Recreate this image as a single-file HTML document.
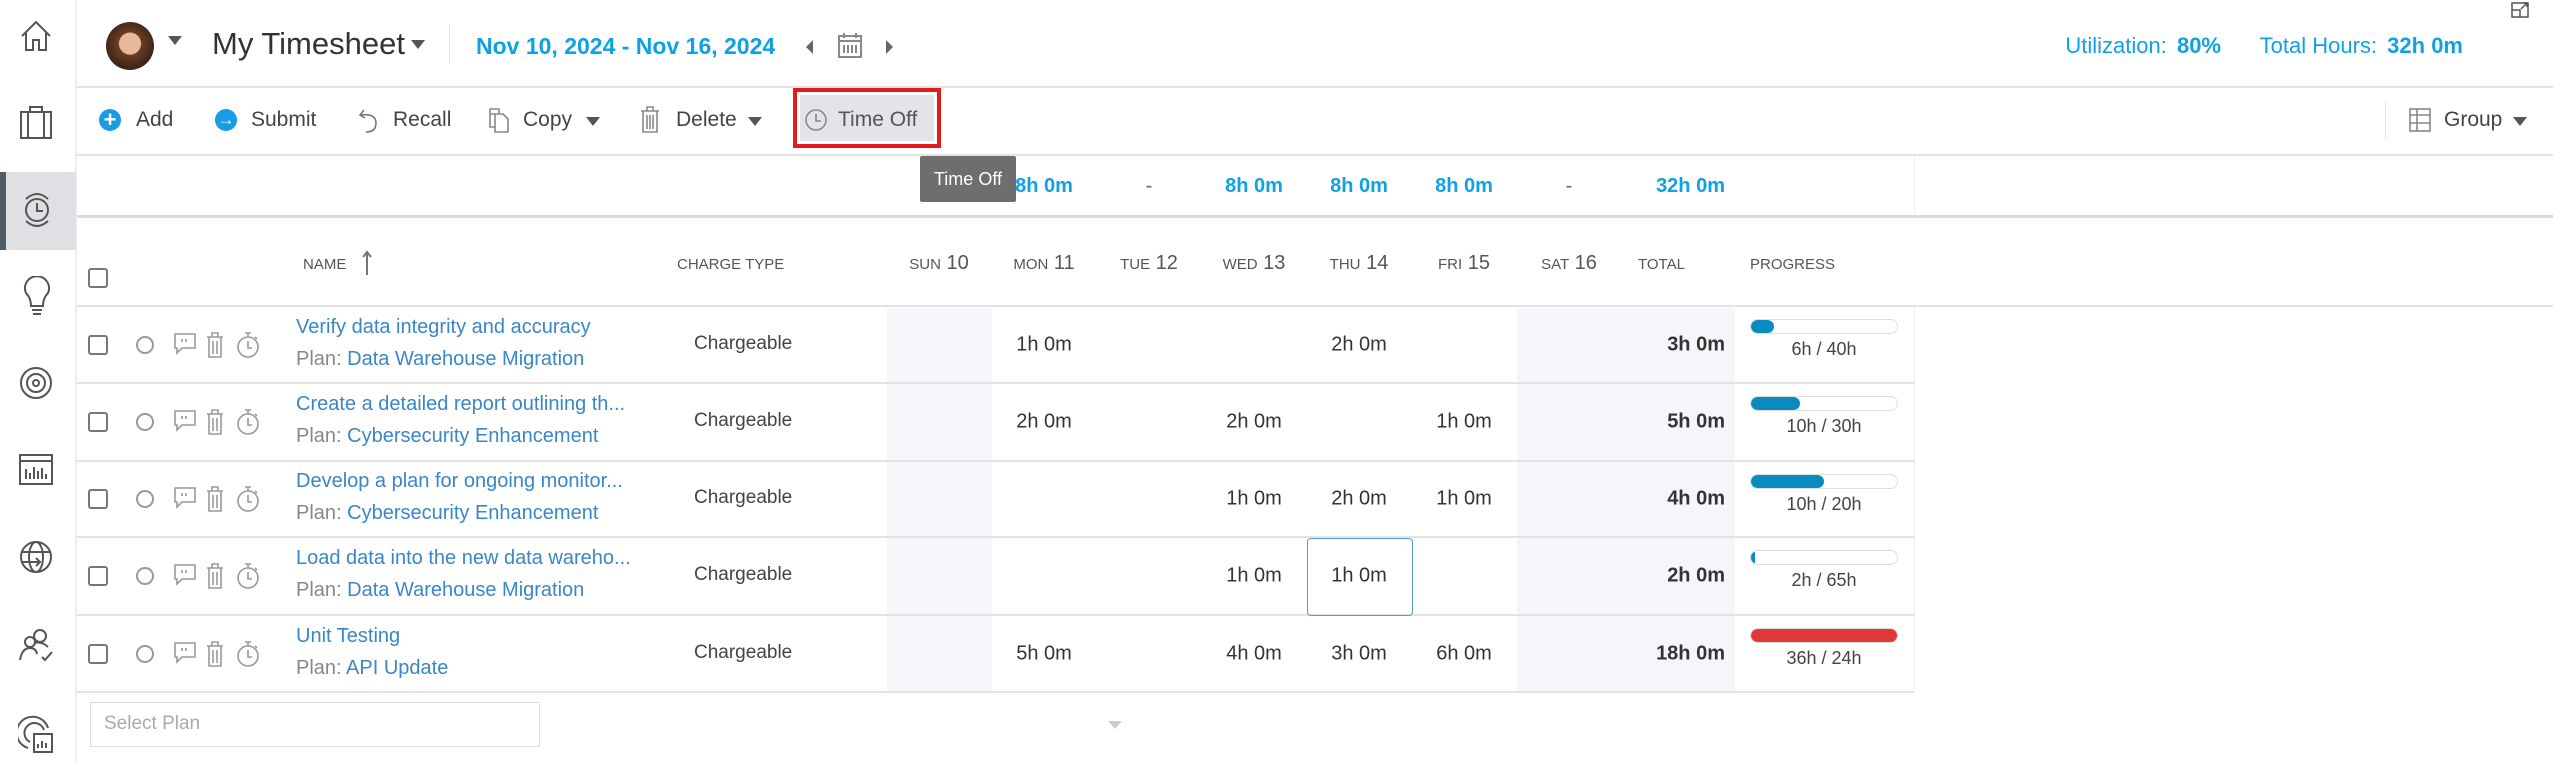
<!DOCTYPE html>
<html><head><meta charset="utf-8">
<style>
*{box-sizing:border-box;margin:0;padding:0}
body{width:2553px;height:762px;overflow:hidden;background:#fff;font-family:"Liberation Sans",sans-serif;position:relative;color:#444}
.a{position:absolute;white-space:nowrap}
.hl{position:absolute;height:2px;background:#e3e3e3}
.blue{color:#0ea1e6}
.link{color:#3a86c8}
.c{transform:translateX(-50%)}
.dh{position:absolute;top:252px;font-size:20px;color:#555;transform:translateX(-50%)}
.dh small{font-size:15px}
.cell{position:absolute;font-size:20px;color:#333;transform:translate(-50%,-50%)}
.tot{position:absolute;font-size:20px;font-weight:bold;color:#333;right:828px;transform:translateY(-50%)}
svg{position:absolute}
</style></head><body>
<!-- sidebar -->
<div class="a" style="left:0;top:0;width:77px;height:762px;border-right:2px solid #eee"></div>
<div class="a" style="left:0;top:172px;width:76px;height:78px;background:#dfe0e3"></div>
<div class="a" style="left:0;top:172px;width:6px;height:78px;background:#4e5d66"></div>
<svg style="left:18px;top:18px" width="36" height="36" viewBox="0 0 36 36" fill="none" stroke="#555" stroke-width="2"><path d="M4 18 L18 4 L32 18 M8 14 V32 H15 V22 H21 V32 H28 V14"/></svg>
<svg style="left:18px;top:104px" width="36" height="36" viewBox="0 0 36 36" fill="none" stroke="#555" stroke-width="2"><rect x="3" y="8" width="30" height="26"/><path d="M12 8 V3 H24 V8 M10 8 V34 M26 8 V34"/></svg>
<svg style="left:20px;top:191px" width="34" height="38" viewBox="0 0 34 38" fill="none" stroke="#555" stroke-width="2"><circle cx="17" cy="19" r="11"/><path d="M17 12 V20 H23 M6 8 Q17 -2 28 8 M6 30 Q17 40 28 30"/></svg>
<svg style="left:20px;top:276px" width="34" height="40" viewBox="0 0 34 40" fill="none" stroke="#555" stroke-width="2"><path d="M11 30 Q11 22 6 17 A12 12 0 1 1 28 17 Q23 22 23 30 Z M12 34 H22 M13 38 H21"/></svg>
<svg style="left:18px;top:365px" width="36" height="36" viewBox="0 0 36 36" fill="none" stroke="#555" stroke-width="2"><circle cx="18" cy="18" r="15"/><circle cx="18" cy="18" r="9"/><circle cx="18" cy="18" r="3"/></svg>
<svg style="left:18px;top:453px" width="36" height="34" viewBox="0 0 36 34" fill="none" stroke="#555" stroke-width="2"><rect x="2" y="2" width="32" height="29"/><path d="M2 8 H34 M8 26 V16 M12 26 V20 M16 26 V14 M20 26 V18 M24 26 V15 M28 26 V21"/></svg>
<svg style="left:18px;top:539px" width="36" height="36" viewBox="0 0 36 36" fill="none" stroke="#555" stroke-width="2"><circle cx="18" cy="18" r="15"/><ellipse cx="18" cy="18" rx="7" ry="15"/><path d="M4 13 H32 M4 23 H22 M18 19 L22 23 L18 27"/></svg>
<svg style="left:18px;top:627px" width="36" height="36" viewBox="0 0 36 36" fill="none" stroke="#555" stroke-width="2"><circle cx="22" cy="9" r="6"/><circle cx="12" cy="15" r="5"/><path d="M2 33 Q4 21 12 21 Q18 21 19 27 M16 16 Q24 14 30 20 M24 30 L27 33 L34 25"/></svg>
<svg style="left:18px;top:714px" width="36" height="40" viewBox="0 0 36 40" fill="none" stroke="#555" stroke-width="2"><path d="M10 34 A16 16 0 1 1 30 14 M12 28 A10 10 0 1 1 26 16"/><rect x="16" y="20" width="18" height="18"/><path d="M20 34 V30 M24 34 V27 M28 34 V29"/></svg>

<!-- header -->
<div class="a" style="left:106px;top:22px;width:48px;height:48px;border-radius:50%;background:radial-gradient(circle at 50% 45%,#e9b89a 0 30%,#6a3d24 32%,#3a2418 70%,#8a5a2a 100%)"></div>
<div class="a" style="left:168px;top:36px;border-left:7px solid transparent;border-right:7px solid transparent;border-top:9px solid #555"></div>
<div class="a" style="left:212px;top:26px;font-size:31px;color:#333">My Timesheet</div>
<div class="a" style="left:411px;top:40px;border-left:7px solid transparent;border-right:7px solid transparent;border-top:9px solid #555"></div>
<div class="a" style="left:449px;top:24px;width:1px;height:40px;background:#e5e5e5"></div>
<div class="a blue" style="left:476px;top:33px;font-size:23px;font-weight:bold">Nov 10, 2024 - Nov 16, 2024</div>
<div class="a" style="left:806px;top:40px;border-top:7px solid transparent;border-bottom:7px solid transparent;border-right:7px solid #666"></div>
<svg style="left:838px;top:32px" width="24" height="26" viewBox="0 0 24 26" fill="none" stroke="#888" stroke-width="2"><rect x="1" y="4" width="22" height="21"/><path d="M1 9 H23 M6 1 V6 M18 1 V6 M6 13 V21 M10 13 V21 M14 13 V21 M18 13 V21"/></svg>
<div class="a" style="left:886px;top:40px;border-top:7px solid transparent;border-bottom:7px solid transparent;border-left:7px solid #666"></div>
<div class="a blue" style="right:332px;top:33px;font-size:22px">Utilization: <b style="margin-left:4px">80%</b></div>
<div class="a blue" style="right:90px;top:33px;font-size:22px">Total Hours: <b style="margin-left:4px">32h 0m</b></div>
<svg style="left:2511px;top:2px" width="18" height="16" viewBox="0 0 18 16" fill="none" stroke="#555" stroke-width="1.5"><rect x="1" y="1" width="16" height="14"/><path d="M1 8 H9 V15 M10 7 L16 1 M12 1 H16 V5"/></svg>
<div class="hl" style="left:77px;right:0;top:86px"></div>

<!-- toolbar -->
<div class="a" style="left:99px;top:109px;width:22px;height:22px;border-radius:50%;background:#1a9be6;color:#fff;font-size:22px;line-height:21px;text-align:center;font-weight:bold">+</div>
<div class="a" style="left:136px;top:108px;font-size:21px">Add</div>
<div class="a" style="left:215px;top:109px;width:22px;height:22px;border-radius:50%;background:#1a9be6;color:#fff;font-size:17px;line-height:22px;text-align:center;font-weight:bold">→</div>
<div class="a" style="left:251px;top:108px;font-size:21px">Submit</div>
<svg style="left:358px;top:108px" width="22" height="26" viewBox="0 0 22 26" fill="none" stroke="#777" stroke-width="1.6"><path d="M6 2 L2 7 L7 10 M2 7 Q18 5 18 15 Q18 24 8 24"/></svg>
<div class="a" style="left:393px;top:108px;font-size:21px">Recall</div>
<svg style="left:488px;top:107px" width="22" height="26" viewBox="0 0 22 26" fill="none" stroke="#888" stroke-width="1.6"><path d="M2 2 H11 V7 H2 Z M2 2 V20 H7 M7 7 V25 H20 V12 L15 7 H11"/></svg>
<div class="a" style="left:523px;top:108px;font-size:21px">Copy</div>
<div class="a" style="left:586px;top:117px;border-left:7px solid transparent;border-right:7px solid transparent;border-top:9px solid #555"></div>
<svg style="left:640px;top:106px" width="20" height="27" viewBox="0 0 20 27" fill="none" stroke="#888" stroke-width="1.6"><path d="M1 5 H19 M7 5 V1 H13 V5 M3 5 V26 H17 V5 M7 9 V23 M10 9 V23 M13 9 V23"/></svg>
<div class="a" style="left:676px;top:108px;font-size:21px">Delete</div>
<div class="a" style="left:748px;top:117px;border-left:7px solid transparent;border-right:7px solid transparent;border-top:9px solid #555"></div>
<div class="a" style="left:793px;top:88px;width:148px;height:60px;border:4px solid #e21c1c;background:#fff"><div style="position:absolute;left:3px;top:3px;right:3px;bottom:3px;background:#e3e4e8"></div></div>
<svg style="left:804px;top:108px" width="24" height="24" viewBox="0 0 24 24" fill="none" stroke="#888" stroke-width="1.6"><circle cx="12" cy="12" r="10"/><path d="M12 6 V13 H17"/></svg>
<div class="a" style="left:838px;top:108px;font-size:21px;color:#555">Time Off</div>
<div class="a" style="left:2385px;top:102px;width:1px;height:38px;background:#e5e5e5"></div>
<svg style="left:2409px;top:108px" width="22" height="24" viewBox="0 0 22 24" fill="none" stroke="#888" stroke-width="1.6"><rect x="1" y="1" width="20" height="22"/><path d="M1 7 H21 M1 15 H21 M8 7 V23 M8 1 V7"/></svg>
<div class="a" style="left:2444px;top:108px;font-size:21px">Group</div>
<div class="a" style="left:2513px;top:117px;border-left:7px solid transparent;border-right:7px solid transparent;border-top:9px solid #555"></div>
<div class="hl" style="left:77px;right:0;top:154px"></div>

<!-- totals row -->
<div class="a" style="left:1914px;top:155px;width:1px;height:61px;background:#eee"></div>
<div class="a blue c" style="left:1044px;top:175px;font-size:20px;font-weight:bold">8h 0m</div>
<div class="a c" style="left:1149px;top:175px;font-size:20px;color:#666">-</div>
<div class="a blue c" style="left:1254px;top:175px;font-size:20px;font-weight:bold">8h 0m</div>
<div class="a blue c" style="left:1359px;top:175px;font-size:20px;font-weight:bold">8h 0m</div>
<div class="a blue c" style="left:1464px;top:175px;font-size:20px;font-weight:bold">8h 0m</div>
<div class="a c" style="left:1569px;top:175px;font-size:20px;color:#666">-</div>
<div class="a blue" style="right:828px;top:175px;font-size:20px;font-weight:bold">32h 0m</div>
<div class="a" style="left:920px;top:156px;width:96px;height:46px;background:#6e6e6e;border-radius:2px;color:#fff;font-size:18px;line-height:46px;text-align:center">Time Off</div>
<div class="a" style="left:77px;right:0;top:215px;height:3px;background:#d8dbe3"></div>

<!-- shaded columns -->
<div class="a" style="left:887px;top:308px;width:105px;height:384px;background:#f5f6fa"></div>
<div class="a" style="left:1517px;top:308px;width:218px;height:384px;background:#f5f6fa"></div>

<!-- column headers -->
<div class="a" style="left:88px;top:268px;width:20px;height:20px;border:2px solid #777;border-radius:3px"></div>
<div class="a" style="left:303px;top:256px;font-size:15px;color:#555">NAME</div>
<svg style="left:361px;top:250px" width="12" height="26" viewBox="0 0 12 26" fill="none" stroke="#777" stroke-width="2"><path d="M6 25 V2 M2 7 L6 2 L10 7"/></svg>
<div class="a" style="left:677px;top:256px;font-size:15px;color:#555">CHARGE TYPE</div>
<div class="dh" style="left:939px"><small>SUN</small> 10</div>
<div class="dh" style="left:1044px"><small>MON</small> 11</div>
<div class="dh" style="left:1149px"><small>TUE</small> 12</div>
<div class="dh" style="left:1254px"><small>WED</small> 13</div>
<div class="dh" style="left:1359px"><small>THU</small> 14</div>
<div class="dh" style="left:1464px"><small>FRI</small> 15</div>
<div class="dh" style="left:1569px"><small>SAT</small> 16</div>
<div class="a" style="left:1638px;top:256px;font-size:15px;color:#555">TOTAL</div>
<div class="a" style="left:1750px;top:256px;font-size:15px;color:#555">PROGRESS</div>
<div class="hl" style="left:77px;right:0;top:305px"></div>

<div id="rows"></div>
<script>
var rows=[
["Verify data integrity and accuracy","Data Warehouse Migration",{1:"1h 0m",4:"2h 0m"},"3h 0m",23,"6h / 40h","#0a8bc0"],
["Create a detailed report outlining th...","Cybersecurity Enhancement",{1:"2h 0m",3:"2h 0m",5:"1h 0m"},"5h 0m",49,"10h / 30h","#0a8bc0"],
["Develop a plan for ongoing monitor...","Cybersecurity Enhancement",{3:"1h 0m",4:"2h 0m",5:"1h 0m"},"4h 0m",73,"10h / 20h","#0a8bc0"],
["Load data into the new data wareho...","Data Warehouse Migration",{3:"1h 0m",4:"1h 0m"},"2h 0m",4,"2h / 65h","#0a8bc0"],
["Unit Testing","API Update",{1:"5h 0m",3:"4h 0m",4:"3h 0m",5:"6h 0m"},"18h 0m",148,"36h / 24h","#e0393c"]];
var tops=[306,383,461,537,615],h="";
rows.forEach(function(r,i){
 var t=tops[i],b=(tops[i+1]||692),c=(t+b)/2;
 h+='<div class="a" style="left:88px;top:'+(c-10)+'px;width:20px;height:20px;border:2px solid #777;border-radius:3px"></div>';
 h+='<div class="a" style="left:136px;top:'+(c-9)+'px;width:18px;height:18px;border:2px solid #999;border-radius:50%"></div>';
 h+='<svg style="left:174px;top:'+(c-12)+'px" width="22" height="22" viewBox="0 0 22 22" fill="none" stroke="#999" stroke-width="1.6"><path d="M1 1 H21 V15 H8 L3 20 V15 H1 Z M8 6 V9 M12 6 V9"/></svg>';
 h+='<svg style="left:206px;top:'+(c-13)+'px" width="18" height="26" viewBox="0 0 18 26" fill="none" stroke="#999" stroke-width="1.6"><path d="M1 5 H17 M6 5 V1 H12 V5 M3 5 V25 H15 V5 M7 9 V22 M11 9 V22"/></svg>';
 h+='<svg style="left:237px;top:'+(c-14)+'px" width="22" height="28" viewBox="0 0 22 28" fill="none" stroke="#999" stroke-width="1.6"><circle cx="11" cy="16" r="10"/><path d="M11 10 V17 H15 M8 2 H14 M11 2 V6 M18 6 L20 8"/></svg>';
 h+='<div class="a link" style="left:296px;top:'+(c-29)+'px;font-size:20px">'+r[0]+'</div>';
 h+='<div class="a" style="left:296px;top:'+(c+3)+'px;font-size:20px;color:#888">Plan: <span class="link">'+r[1]+'</span></div>';
 h+='<div class="a" style="left:694px;top:'+(c-12)+'px;font-size:19px;color:#444">Chargeable</div>';
 for(var k in r[2]){h+='<div class="cell" style="left:'+(939+105*k)+'px;top:'+c+'px">'+r[2][k]+'</div>';}
 h+='<div class="tot" style="top:'+c+'px">'+r[3]+'</div>';
 h+='<div class="a" style="left:1750px;top:'+(t+13)+'px;width:148px;height:15px;border:1px solid #ddd;border-radius:8px;background:#fff;overflow:hidden"><div style="width:'+r[4]+'px;height:100%;background:'+r[6]+';border-radius:8px"></div></div>';
 h+='<div class="a c" style="left:1824px;top:'+(t+33)+'px;font-size:18px;color:#444">'+r[5]+'</div>';
 h+='<div class="hl" style="left:77px;width:1837px;top:'+(b-1)+'px;height:2px"></div>';
});
h+='<div class="a" style="left:1307px;top:538px;width:106px;height:78px;border:1.5px solid #5b9bd5;border-radius:4px;background:transparent"></div>';
h+='<div class="a" style="left:1914px;top:306px;width:1px;height:386px;background:#eee"></div>';
document.getElementById('rows').innerHTML=h;
</script>
<div class="a" style="left:90px;top:702px;width:450px;height:45px;border:1.5px solid #ddd"></div>
<div class="a" style="left:104px;top:713px;font-size:19px;color:#aaa">Select Plan</div>
<div class="a" style="left:1108px;top:721px;border-left:7px solid transparent;border-right:7px solid transparent;border-top:8px solid #ccc"></div>
</body></html>
